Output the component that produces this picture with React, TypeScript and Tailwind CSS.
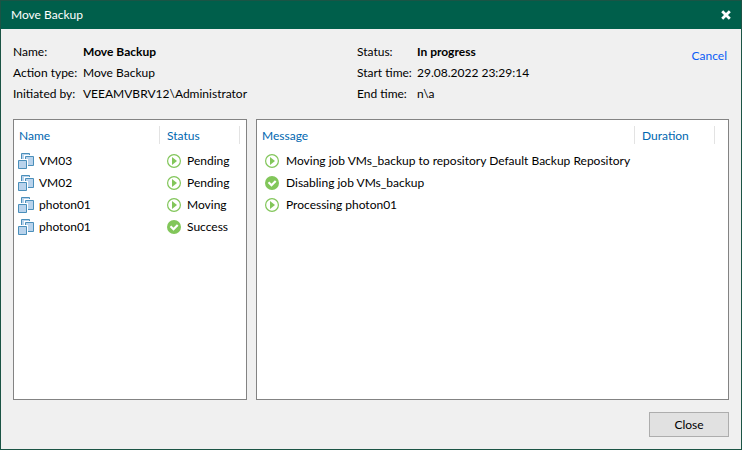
import type { ReactNode } from "react";

type State = "running" | "done";

const objects: { name: string; status: string; state: State }[] = [
  { name: "VM03", status: "Pending", state: "running" },
  { name: "VM02", status: "Pending", state: "running" },
  { name: "photon01", status: "Moving", state: "running" },
  { name: "photon01", status: "Success", state: "done" },
];

const messages: { text: string; state: State; duration: string }[] = [
  { text: "Moving job VMs_backup to repository Default Backup Repository", state: "running", duration: "" },
  { text: "Disabling job VMs_backup", state: "done", duration: "" },
  { text: "Processing photon01", state: "running", duration: "" },
];

function StateIcon({ state }: { state: State }) {
  return state === "running" ? (
    <svg className="size-3.5 shrink-0" viewBox="0 0 14 14" aria-hidden="true">
      <circle cx="7" cy="7" r="6.4" fill="#fff" stroke="#82c65a" strokeWidth="1.2" />
      <path d="M5 3v8l5-4z" fill="#82c65a" />
    </svg>
  ) : (
    <svg className="size-3.5 shrink-0" viewBox="0 0 14 14" aria-hidden="true">
      <circle cx="7" cy="7" r="7" fill="#82c65a" />
      <path d="M3.5 6.2l3 3 4.2-4.2" fill="none" stroke="#fff" strokeWidth="2.2" />
    </svg>
  );
}

function MachineIcon() {
  return (
    <svg className="size-4 shrink-0" viewBox="0 0 16 16" aria-hidden="true">
      <path d="M3.5 0.5h8v8h-8z" fill="#b9d3ec" stroke="#4a8fba" />
      <path d="M6 2h10v10H6z" fill="#fff" />
      <path d="M7.5 3.5h8v9h-8z" fill="#b9d3ec" stroke="#4a8fba" />
      <path d="M0 6h10v10H0z" fill="#fff" />
      <path d="M0.5 7.5h8v8h-8z" fill="#b9d3ec" stroke="#4a8fba" />
    </svg>
  );
}

function HeadCell({ className = "", children }: { className?: string; children: ReactNode }) {
  return (
    <th scope="col" className="h-[30px] p-0 pt-1.5 text-left align-top font-normal text-[#0067b0]">
      <div className={`h-[18px] border-r border-[#e3e3e3] leading-5 ${className}`}>{children}</div>
    </th>
  );
}

function Field({ label, children, strong = false }: { label: string; children: ReactNode; strong?: boolean }) {
  return (
    <>
      <dt>{label}</dt>
      <dd className={strong ? "font-bold" : ""}>{children}</dd>
    </>
  );
}

export default function App() {
  return (
    <div className="flex min-h-screen flex-col border border-[#1b5445] bg-[#f0f0f0] font-['Lato','Open_Sans',sans-serif] text-[12px] text-black">
      <header className="flex h-7 items-center justify-between bg-[#005f4b] pr-2.5 pl-2.5 text-white">
        <h1>Move Backup</h1>
        <button type="button" aria-label="Close window">
          <svg className="size-2.5" viewBox="0 0 10 10" aria-hidden="true">
            <path d="M1.2 1.2l7.6 7.6M8.8 1.2L1.2 8.8" stroke="#fff" strokeWidth="2.8" />
          </svg>
        </button>
      </header>

      <main className="flex flex-1 flex-col p-3">
        <section className="flex items-start leading-[21px]">
          <dl className="grid w-[344px] grid-cols-[70px_1fr]">
            <Field label="Name:" strong>Move Backup</Field>
            <Field label="Action type:">Move Backup</Field>
            <Field label="Initiated by:">VEEAMVBRV12\Administrator</Field>
          </dl>
          <dl className="grid flex-1 grid-cols-[60px_1fr]">
            <Field label="Status:" strong>In progress</Field>
            <Field label="Start time:">29.08.2022 23:29:14</Field>
            <Field label="End time:">n\a</Field>
          </dl>
          <a href="#cancel" className="mt-1 mr-0.5 text-[#0a5cf5]">Cancel</a>
        </section>

        <div className="mt-[15px] flex flex-1 gap-[9px]">
          <section className="w-[234px] border border-[#838383] bg-white">
            <table className="w-full table-fixed border-collapse">
              <colgroup>
                <col />
                <col className="w-20" />
                <col className="w-1.5" />
              </colgroup>
              <thead>
                <tr>
                  <HeadCell className="pl-[5px]">Name</HeadCell>
                  <HeadCell className="pl-[7px]">Status</HeadCell>
                  <td />
                </tr>
              </thead>
              <tbody>
                {objects.map((item, index) => (
                  <tr key={index} className="h-[22px]">
                    <td className="p-0">
                      <div className="flex items-center gap-[5px] pl-1">
                        <MachineIcon />
                        {item.name}
                      </div>
                    </td>
                    <td className="p-0">
                      <div className="flex items-center gap-1.5 pl-[7px]">
                        <StateIcon state={item.state} />
                        {item.status}
                      </div>
                    </td>
                    <td />
                  </tr>
                ))}
              </tbody>
            </table>
          </section>

          <section className="flex-1 border border-[#838383] bg-white">
            <table className="w-full table-fixed border-collapse">
              <colgroup>
                <col />
                <col className="w-20" />
                <col className="w-[13px]" />
              </colgroup>
              <thead>
                <tr>
                  <HeadCell className="pl-[5px]">Message</HeadCell>
                  <HeadCell className="pl-[7px]">Duration</HeadCell>
                  <td />
                </tr>
              </thead>
              <tbody>
                {messages.map((item) => (
                  <tr key={item.text} className="h-[22px]">
                    <td className="p-0">
                      <div className="flex items-center gap-[7px] pl-2 whitespace-nowrap">
                        <StateIcon state={item.state} />
                        {item.text}
                      </div>
                    </td>
                    <td className="p-0">{item.duration}</td>
                    <td />
                  </tr>
                ))}
              </tbody>
            </table>
          </section>
        </div>

        <footer className="mt-3 flex justify-end">
          <button type="button" className="h-[25px] w-20 border border-[#adadad] bg-[#e1e1e1]">
            Close
          </button>
        </footer>
      </main>
    </div>
  );
}
